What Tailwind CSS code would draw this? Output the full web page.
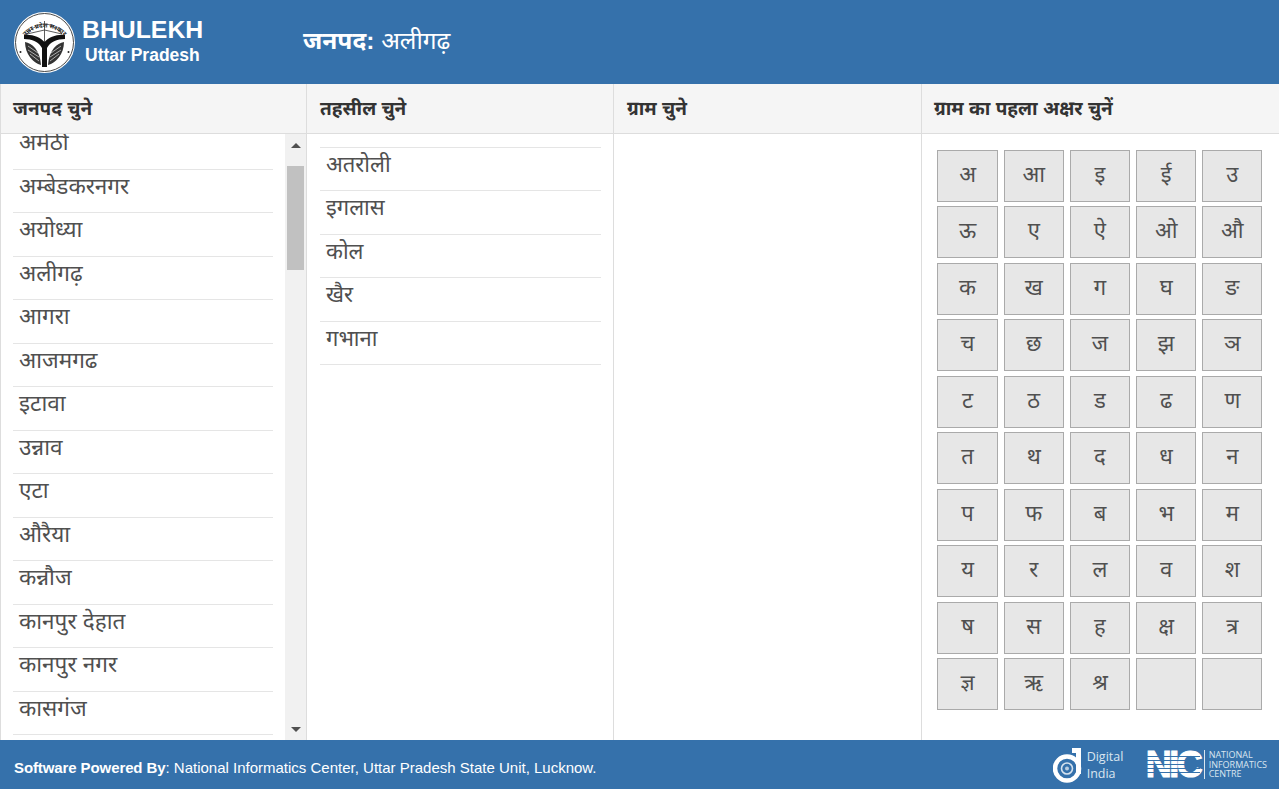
<!DOCTYPE html>
<html lang="hi">
<head>
  <meta charset="UTF-8"/>
  <title>Bhulekh Uttar Pradesh</title>
  <script src="https://cdn.jsdelivr.net/npm/@tailwindcss/browser@4"></script>
</head>
<body class="h-[789px] w-[1279px] overflow-hidden flex flex-col bg-white font-['Liberation_Sans','Noto_Sans',sans-serif] text-[#505050]">

  <!-- Header -->
  <header class="h-[84px] shrink-0 bg-[#3571ab] flex items-center text-white">
    <svg class="ml-[14px] w-[61px] h-[61px] shrink-0" viewBox="0 0 61 61">
      <circle cx="30.5" cy="30.5" r="30.5" fill="#fff"/>
      <circle cx="30.5" cy="30.5" r="29" fill="none" stroke="#333" stroke-width="0.9"/>
      <path id="ring" d="M5.5 36 A25.5 25.5 0 0 1 55.5 36" fill="none"/>
      <text font-size="6.2" font-weight="700" fill="#222"><textPath href="#ring" startOffset="50%" text-anchor="middle">उत्तर प्रदेश सरकार</textPath></text>
      <!-- bow string and arrow -->
      <path d="M13 22 C19 15 25 12 30.5 12 C36 12 42 15 48 22 M13 22 L30.5 18 L48 22 M30.5 9 V30" fill="none" stroke="#333" stroke-width="0.8"/>
      <!-- fish -->
      <path d="M11 30 C18 31 26 38 27 53 C19 51 11 42 11 30 Z M50 30 C43 31 35 38 34 53 C42 51 50 42 50 30 Z" fill="#333"/>
      <path d="M14 34 L24 41 M14 38 L25 45 M16 42 L25 49 M47 34 L37 41 M47 38 L36 45 M45 42 L36 49" stroke="#fff" stroke-width="0.6"/>
      <path d="M10 23 C18 22 26 25 30.5 30 C35 25 43 22 51 23 L51 27 C43 27 36 30 33 36 L33 55 L28 55 L28 36 C25 30 18 27 10 27 Z" fill="#111"/>
      <circle cx="6.5" cy="40" r="1" fill="#222"/><circle cx="54.5" cy="40" r="1" fill="#222"/>
    </svg>
    <div class="ml-[7px] w-[221px] flex flex-col items-start">
      <div class="-mt-[2px] text-[24.8px] leading-[28px] font-bold">BHULEKH</div>
      <div class="ml-[3px] text-[17.5px] leading-[22px] font-bold">Uttar Pradesh</div>
    </div>
    <div class="-mt-[2px] text-[24.5px] leading-[30px]"><b>जनपद:</b> अलीगढ़</div>
  </header>

  <!-- Columns -->
  <main class="h-[656px] shrink-0 grid grid-cols-[307px_307px_308px_357px]">

    <section class="border-l border-r border-[#ddd] flex flex-col min-h-0">
      <h2 class="h-[50px] shrink-0 bg-[#f5f5f5] border-b border-[#ddd] pl-[12px] pt-[2px] flex items-center text-[19px] font-bold text-[#333]">जनपद चुने</h2>
      <div class="flex-1 flex min-h-0">
        <div class="flex-1 overflow-hidden pl-[12px] pr-[12px]">
          <ul id="districts" class="-mt-[8px] text-[22.5px]"></ul>
        </div>
        <!-- scrollbar -->
        <div class="w-[21px] shrink-0 bg-[#f1f1f1] flex flex-col items-center">
          <div class="h-[22px] w-full flex items-center justify-center">
            <div class="w-0 h-0 border-x-[5px] border-x-transparent border-b-[5px] border-b-[#505050]"></div>
          </div>
          <div class="mt-[10px] h-[104px] w-[17px] bg-[#c1c1c1]"></div>
          <div class="mt-auto h-[22px] w-full flex items-center justify-center">
            <div class="w-0 h-0 border-x-[5px] border-x-transparent border-t-[5px] border-t-[#505050]"></div>
          </div>
        </div>
      </div>
    </section>

    <section class="border-r border-[#ddd] flex flex-col min-h-0">
      <h2 class="h-[50px] shrink-0 bg-[#f5f5f5] border-b border-[#ddd] pl-[13px] pt-[2px] flex items-center text-[19px] font-bold text-[#333]">तहसील चुने</h2>
      <ul id="tehsils" class="ml-[13px] mr-[12px] mt-[12.75px] border-t border-[#e5e5e5] text-[22px]"></ul>
    </section>

    <section class="border-r border-[#ddd] flex flex-col min-h-0">
      <h2 class="h-[50px] shrink-0 bg-[#f5f5f5] border-b border-[#ddd] pl-[13px] pt-[2px] flex items-center text-[19px] font-bold text-[#333]">ग्राम चुने</h2>
    </section>

    <section class="flex flex-col min-h-0">
      <h2 class="h-[50px] shrink-0 bg-[#f5f5f5] border-b border-[#ddd] pl-[12px] pt-[2px] flex items-center text-[19px] font-bold text-[#333]">ग्राम का पहला अक्षर चुनें</h2>
      <div id="letters" class="ml-[15.45px] mt-[15.75px] w-[325px] grid grid-cols-5 gap-x-[6px] gap-y-[4.5px] auto-rows-[52px] text-[22px]"></div>
    </section>
  </main>

  <!-- Footer -->
  <footer class="h-[49px] shrink-0 bg-[#3571ab] flex items-center text-white text-[15px] pl-[14px]">
    <div class="mt-[7px]"><b class="tracking-[-0.1px]">Software Powered By</b>: National Informatics Center, Uttar Pradesh State Unit, Lucknow.</div>
    <div class="ml-auto mr-[12px] flex items-center">
      <svg class="w-[32px] h-[36px]" viewBox="0 0 32 36">
        <circle cx="14" cy="21.5" r="12" fill="none" stroke="#fff" stroke-width="4.5"/>
        <circle cx="14" cy="21.5" r="5.5" fill="none" stroke="#d5e2ee" stroke-width="1.6"/>
        <circle cx="14" cy="21.5" r="2" fill="#b9cde0"/>
        <path d="M19 1 H28 V27 H23 V6 H19 Z" fill="#fff"/>
      </svg>
      <div class="ml-[2px] w-[59px] text-[12.5px] leading-[17px] text-[#dbe6f0] font-['Open_Sans',sans-serif]">
        <div>Digital</div><div>India</div>
      </div>
      <div class="relative h-[25px] w-[54px]">
        <div class="text-[36px] leading-[25px] font-bold text-white tracking-[-2.5px] [-webkit-text-stroke:1px_white] font-['Liberation_Sans',sans-serif]">NIC</div>
        <div class="absolute inset-x-0 top-[4px] h-px bg-[#3571ab]"></div>
        <div class="absolute inset-x-0 top-[8px] h-px bg-[#3571ab]"></div>
        <div class="absolute inset-x-0 top-[12px] h-px bg-[#3571ab]"></div>
        <div class="absolute inset-x-0 top-[16px] h-px bg-[#3571ab]"></div>
        <div class="absolute inset-x-0 top-[20px] h-px bg-[#3571ab]"></div>
      </div>
      <div class="ml-[4px] border-l border-[#dbe6f0] pl-[4px] text-[9px] leading-[9.5px] text-[#dbe6f0] font-['Open_Sans',sans-serif]">
        <div>NATIONAL</div><div>INFORMATICS</div><div>CENTRE</div>
      </div>
    </div>
  </footer>

  <script>
    const districts = ["अमेठी","अम्बेडकरनगर","अयोध्या","अलीगढ़","आगरा","आजमगढ","इटावा","उन्नाव","एटा","औरैया","कन्नौज","कानपुर देहात","कानपुर नगर","कासगंज"];
    const tehsils = ["अतरोली","इगलास","कोल","खैर","गभाना"];
    const letters = ["अ","आ","इ","ई","उ","ऊ","ए","ऐ","ओ","औ","क","ख","ग","घ","ङ","च","छ","ज","झ","ञ","ट","ठ","ड","ढ","ण","त","थ","द","ध","न","प","फ","ब","भ","म","य","र","ल","व","श","ष","स","ह","क्ष","त्र","ज्ञ","ऋ","श्र","",""];

    document.getElementById("districts").innerHTML = districts
      .map(d => `<li class="h-[43.5px] border-b border-[#e5e5e5] pl-[6px] leading-[34px] whitespace-nowrap">${d}</li>`).join("");
    document.getElementById("tehsils").innerHTML = tehsils
      .map(t => `<li class="h-[43.5px] border-b border-[#e5e5e5] pl-[6px] leading-[33px]">${t}</li>`).join("");
    document.getElementById("letters").innerHTML = letters
      .map(l => `<button class="bg-[#e7e7e7] border border-[#aaa] pb-[3px]">${l}</button>`).join("");
  </script>
</body>
</html>
